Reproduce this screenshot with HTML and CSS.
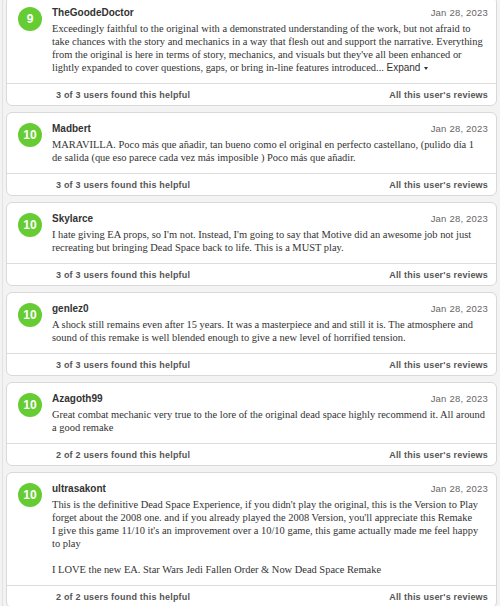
FILE: index.html
```html
<!DOCTYPE html>
<html lang="en">

<head>
    <meta charset="UTF-8">
    <meta name="viewport" content="width=device-width, initial-scale=1.0">
    <title>User Reviews</title>
    <link rel="stylesheet" href="styles.css">
</head>

<body>
    <div class="review-list">

        <div class="review">
            <div class="review-main">
                <div class="score">9</div>
                <div class="review-content">
                    <div class="review-head">
                        <span class="author">TheGoodeDoctor</span>
                        <span class="date">Jan 28, 2023</span>
                    </div>
                    <p class="review-text">Exceedingly faithful to the original with a demonstrated understanding of the work, but not afraid to take chances with the story and mechanics in a way that flesh out and support the narrative. Everything from the original is here in terms of story, mechanics, and visuals but they've all been enhanced or lightly expanded to cover questions, gaps, or bring in-line features introduced... <a href="#" class="expand">Expand <span class="caret"></span></a></p>
                </div>
            </div>
            <div class="review-foot">
                <span>3 of 3 users found this helpful</span>
                <a href="#">All this user's reviews</a>
            </div>
        </div>

        <div class="review">
            <div class="review-main">
                <div class="score">10</div>
                <div class="review-content">
                    <div class="review-head">
                        <span class="author">Madbert</span>
                        <span class="date">Jan 28, 2023</span>
                    </div>
                    <p class="review-text">MARAVILLA. Poco más que añadir, tan bueno como el original en perfecto castellano, (pulido día 1 de salida (que eso parece cada vez más imposible ) Poco más que añadir.</p>
                </div>
            </div>
            <div class="review-foot">
                <span>3 of 3 users found this helpful</span>
                <a href="#">All this user's reviews</a>
            </div>
        </div>

        <div class="review">
            <div class="review-main">
                <div class="score">10</div>
                <div class="review-content">
                    <div class="review-head">
                        <span class="author">Skylarce</span>
                        <span class="date">Jan 28, 2023</span>
                    </div>
                    <p class="review-text">I hate giving EA props, so I'm not. Instead, I'm going to say that Motive did an awesome job not just recreating but bringing Dead Space back to life. This is a MUST play.</p>
                </div>
            </div>
            <div class="review-foot">
                <span>3 of 3 users found this helpful</span>
                <a href="#">All this user's reviews</a>
            </div>
        </div>

        <div class="review">
            <div class="review-main">
                <div class="score">10</div>
                <div class="review-content">
                    <div class="review-head">
                        <span class="author">genlez0</span>
                        <span class="date">Jan 28, 2023</span>
                    </div>
                    <p class="review-text">A shock still remains even after 15 years. It was a masterpiece and and still it is. The atmosphere and sound of this remake is well blended enough to give a new level of horrified tension.</p>
                </div>
            </div>
            <div class="review-foot">
                <span>3 of 3 users found this helpful</span>
                <a href="#">All this user's reviews</a>
            </div>
        </div>

        <div class="review">
            <div class="review-main">
                <div class="score">10</div>
                <div class="review-content">
                    <div class="review-head">
                        <span class="author">Azagoth99</span>
                        <span class="date">Jan 28, 2023</span>
                    </div>
                    <p class="review-text">Great combat mechanic very true to the lore of the original dead space highly recommend it. All around a good remake</p>
                </div>
            </div>
            <div class="review-foot">
                <span>2 of 2 users found this helpful</span>
                <a href="#">All this user's reviews</a>
            </div>
        </div>

        <div class="review">
            <div class="review-main">
                <div class="score">10</div>
                <div class="review-content">
                    <div class="review-head">
                        <span class="author">ultrasakont</span>
                        <span class="date">Jan 28, 2023</span>
                    </div>
                    <p class="review-text">This is the definitive Dead Space Experience, if you didn't play the original, this is the Version to Play forget about the 2008 one. and if you already played the 2008 Version, you'll appreciate this Remake<br>I give this game 11/10 it's an improvement over a 10/10 game, this game actually made me feel happy to play<br><br>I LOVE the new EA. Star Wars Jedi Fallen Order &amp; Now Dead Space Remake</p>
                </div>
            </div>
            <div class="review-foot">
                <span>2 of 2 users found this helpful</span>
                <a href="#">All this user's reviews</a>
            </div>
        </div>

    </div>
</body>

</html>
```

FILE: styles.css
```css
* {
    margin: 0;
    padding: 0;
    box-sizing: border-box;
}

body {
    background: #f3f3f3;
    font-family: 'Liberation Sans', Arial, sans-serif;
    color: #333;
}

.review-list {
    margin-left: 2px;
    margin-top: -4px;
    padding: 0 3px;
    border-left: 1px solid #e2e2e2;
    display: flex;
    flex-direction: column;
    gap: 6px;
}

.review {
    background: #fff;
    border: 1px solid #d9d9d9;
    border-radius: 6px;
}

.review-main {
    display: flex;
    gap: 10px;
    padding: 9px 8px 9px 11px;
}

.score {
    flex: none;
    width: 24px;
    height: 24px;
    border-radius: 50%;
    background: #66cc33;
    color: #fff;
    font-weight: bold;
    font-size: 12px;
    line-height: 24px;
    text-align: center;
    margin-top: 1px;
}

.review-content {
    flex: 1;
    min-width: 0;
}

.review-head {
    display: flex;
    justify-content: space-between;
    align-items: baseline;
    height: 13px;
    line-height: 13px;
    margin-bottom: 3px;
}

.author {
    font-size: 10px;
    font-weight: bold;
    color: #333;
}

.date {
    font-size: 9.5px;
    letter-spacing: 0.2px;
    color: #666;
}

.review-text {
    font-family: 'Liberation Serif', 'Times New Roman', serif;
    font-size: 10.45px;
    line-height: 13px;
    color: #333;
    padding-right: 2px;
}

.expand {
    font-family: 'Liberation Sans', Arial, sans-serif;
    font-size: 10px;
    color: #333;
    text-decoration: none;
}

.caret {
    display: inline-block;
    width: 0;
    height: 0;
    border-left: 2.5px solid transparent;
    border-right: 2.5px solid transparent;
    border-top: 3px solid #333;
    vertical-align: middle;
    margin-left: 1px;
}

.review-foot {
    display: flex;
    justify-content: space-between;
    align-items: center;
    height: 22px;
    padding: 0 8px 0 49px;
    border-top: 1px solid #dcdcdc;
    font-size: 9px;
    font-weight: bold;
    letter-spacing: 0.2px;
    color: #555;
}

.review-foot a {
    color: #555;
    text-decoration: none;
}
```
